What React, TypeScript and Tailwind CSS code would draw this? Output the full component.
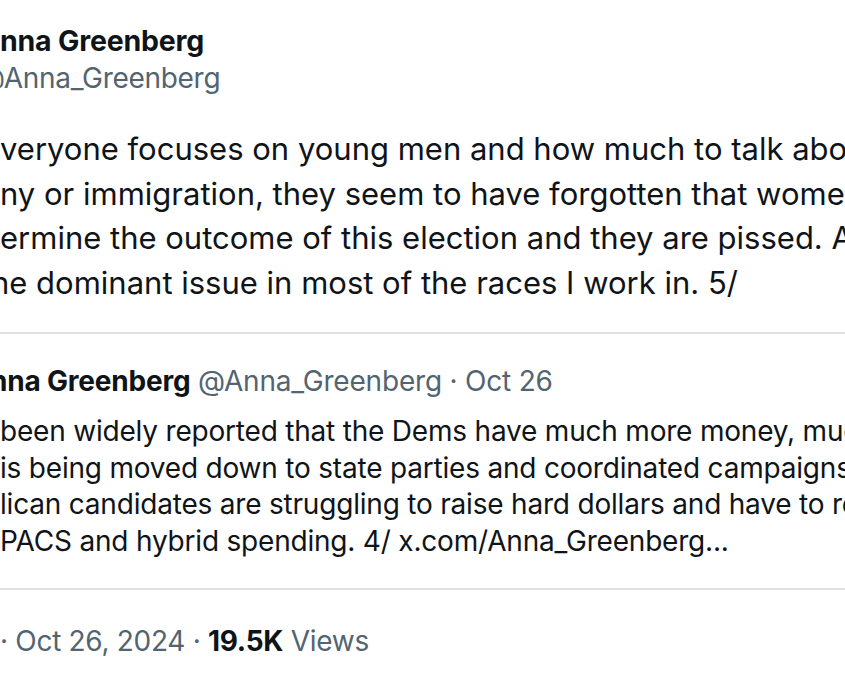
const tweetLines = [
  { text: 'veryone focuses on young men and how much to talk about the', shift: '' },
  { text: 'ny or immigration, they seem to have forgotten that women will', shift: '' },
  { text: 'ermine the outcome of this election and they are pissed. Abortion is', shift: '' },
  { text: 'he dominant issue in most of the races I work in. 5/', shift: '-ml-[9px]' },
];

const quoteLines = [
  'been widely reported that the Dems have much more money, much of',
  'is being moved down to state parties and coordinated campaigns.',
  'lican candidates are struggling to raise hard dollars and have to rely on',
  'PACS and hybrid spending. 4/ x.com/Anna_Greenberg...',
];

export default function App() {
  return (
    <div className="w-[845px] h-[684px] overflow-hidden bg-white text-[#0f1419] font-['Inter','Liberation_Sans',sans-serif] whitespace-nowrap">
      {/* author */}
      <div className="pt-[23px]">
        <div className="text-[28.5px] leading-[36px] font-bold tracking-[-0.2px]">nna Greenberg</div>
        <div className="-ml-[22px] text-[28px] leading-[36px] text-[#536471] mt-[1px] tracking-[-0.3px]">@Anna_Greenberg</div>
      </div>

      {/* tweet body */}
      <div className="mt-[31px] text-[31px] leading-[44.5px] tracking-[0px]">
        {tweetLines.map((line) => (
          <div key={line.text} className={line.shift}>{line.text}</div>
        ))}
      </div>

      <div className="mt-[27px] h-[2px] bg-[#dde2e5]" />

      {/* quoted tweet */}
      <div className="pt-[29px]">
        <div className="-ml-[10px] text-[28px] leading-[36px] tracking-[-0.2px]">
          <span className="font-bold">nna Greenberg</span>{' '}
          <span className="text-[#536471]">@Anna_Greenberg · Oct 26</span>
        </div>
        <div className="mt-[14px] text-[28px] leading-[36.7px] tracking-[-0.2px]">
          {quoteLines.map((line) => (
            <div key={line}>{line}</div>
          ))}
        </div>
      </div>

      <div className="mt-[28px] h-[2px] bg-[#dde2e5]" />

      {/* meta */}
      <div className="pt-[33px] text-[28px] leading-[36px] tracking-[-0.3px] text-[#536471]">
        · Oct 26, 2024 · <span className="font-bold text-[#0f1419]">19.5K</span> Views
      </div>
    </div>
  );
}
